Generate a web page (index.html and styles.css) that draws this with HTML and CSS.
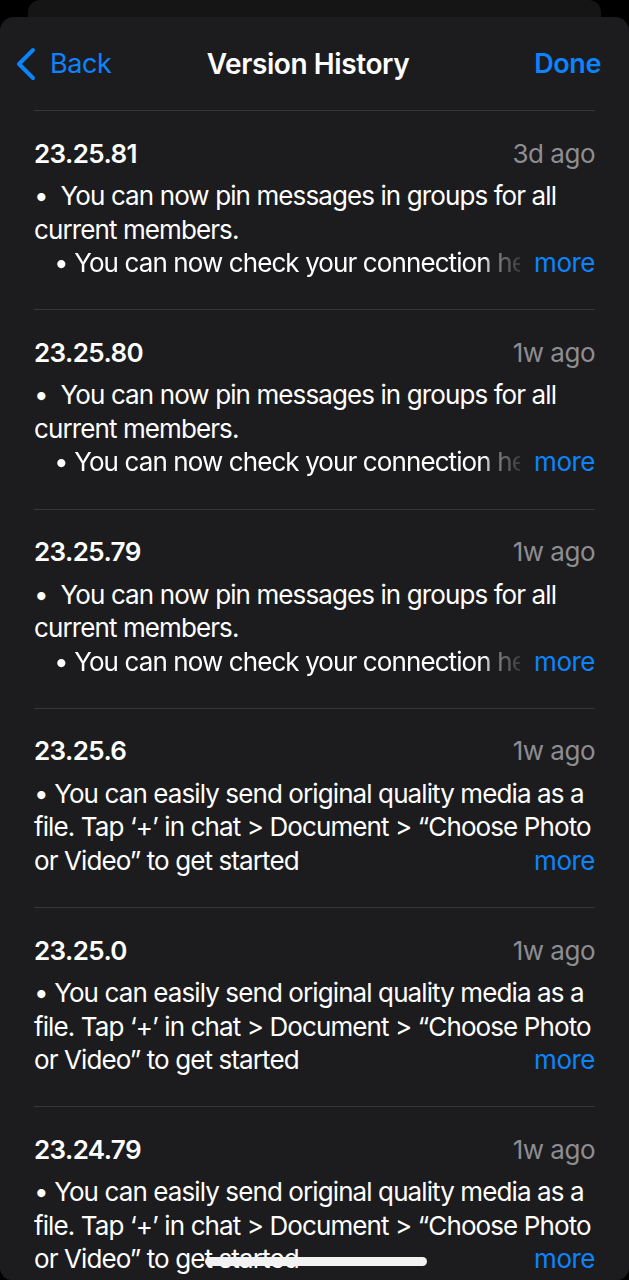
FILE: index.html
```html
<!DOCTYPE html>
<html lang="en">
<head>
<meta charset="utf-8">
<title>Version History</title>
<link rel="stylesheet" href="styles.css">
</head>
<body>
<div class="back-card"></div>
<div class="sheet">
  <header class="nav">
    <div class="nav-back">
      <svg class="chev" width="22" height="34" viewBox="0 0 22 34"><path d="M18 3 L4 17 L18 31" fill="none" stroke="#0b84fe" stroke-width="4" stroke-linecap="round" stroke-linejoin="round"/></svg>
      <span>Back</span>
    </div>
    <div class="nav-title">Version History</div>
    <div class="nav-done">Done</div>
  </header>

  <section class="entry">
    <div class="entry-head"><span class="ver">23.25.81</span><span class="when">3d ago</span></div>
    <div class="body">
      <div class="line"><span class="dot">•</span>&nbsp; You can now pin messages in groups for all</div>
      <div class="line">current members.</div>
      <div class="line row"><span class="trunc"><span class="sub">•</span> You can now check your connection health</span><span class="more">more</span></div>
    </div>
  </section>

  <section class="entry">
    <div class="entry-head"><span class="ver">23.25.80</span><span class="when">1w ago</span></div>
    <div class="body">
      <div class="line"><span class="dot">•</span>&nbsp; You can now pin messages in groups for all</div>
      <div class="line">current members.</div>
      <div class="line row"><span class="trunc"><span class="sub">•</span> You can now check your connection health</span><span class="more">more</span></div>
    </div>
  </section>

  <section class="entry">
    <div class="entry-head"><span class="ver">23.25.79</span><span class="when">1w ago</span></div>
    <div class="body">
      <div class="line"><span class="dot">•</span>&nbsp; You can now pin messages in groups for all</div>
      <div class="line">current members.</div>
      <div class="line row"><span class="trunc"><span class="sub">•</span> You can now check your connection health</span><span class="more">more</span></div>
    </div>
  </section>

  <section class="entry">
    <div class="entry-head"><span class="ver">23.25.6</span><span class="when">1w ago</span></div>
    <div class="body">
      <div class="line"><span class="dot">•</span> You can easily send original quality media as a</div>
      <div class="line">file. Tap ‘+’ in chat &gt; Document &gt; “Choose Photo</div>
      <div class="line row"><span>or Video” to get started</span><span class="more">more</span></div>
    </div>
  </section>

  <section class="entry">
    <div class="entry-head"><span class="ver">23.25.0</span><span class="when">1w ago</span></div>
    <div class="body">
      <div class="line"><span class="dot">•</span> You can easily send original quality media as a</div>
      <div class="line">file. Tap ‘+’ in chat &gt; Document &gt; “Choose Photo</div>
      <div class="line row"><span>or Video” to get started</span><span class="more">more</span></div>
    </div>
  </section>

  <section class="entry">
    <div class="entry-head"><span class="ver">23.24.79</span><span class="when">1w ago</span></div>
    <div class="body">
      <div class="line"><span class="dot">•</span> You can easily send original quality media as a</div>
      <div class="line">file. Tap ‘+’ in chat &gt; Document &gt; “Choose Photo</div>
      <div class="line row"><span>or Video” to get started</span><span class="more">more</span></div>
    </div>
  </section>

  <div class="home-indicator"></div>
</div>
</body>
</html>
```

FILE: styles.css
```css
* { box-sizing: border-box; }
html, body {
  margin: 0;
  padding: 0;
  background: #000;
  width: 629px;
  height: 1280px;
  overflow: hidden;
  font-family: Inter, "Noto Sans", sans-serif;
  color: #fff;
  -webkit-font-smoothing: antialiased;
}
.back-card {
  margin: 0 28px;
  height: 17px;
  background: #151516;
  border-radius: 12px 12px 0 0;
}
.sheet {
  position: relative;
  height: 1263px;
  background: #1c1c1e;
  border-radius: 14px 14px 12px 12px;
  overflow: hidden;
}
.nav {
  height: 93px;
  display: grid;
  grid-template-columns: 1fr auto 1fr;
  align-items: center;
  padding: 0 28px 0 15px;
  font-size: 27px;
  letter-spacing: -0.4px;
}
.nav-back {
  display: flex;
  align-items: center;
  gap: 13px;
  color: #0b84fe;
}
.chev { display: block; }
.nav-title {
  font-weight: 600;
  font-size: 28px;
  color: #fff;
}
.nav-done {
  justify-self: end;
  color: #0b84fe;
  font-weight: 600;
}
.entry {
  margin: 0 34px;
  border-top: 1px solid #363638;
  padding: 25px 0 29.8px;
  font-size: 26px;
  letter-spacing: -0.9px;
}
.entry-head {
  display: flex;
  justify-content: space-between;
  align-items: center;
  height: 34px;
  margin-bottom: 9px;
}
.ver { font-weight: 600; letter-spacing: -0.6px; }
.when { color: #8d8d93; letter-spacing: -0.5px; }
.line {
  height: 33.5px;
  line-height: 33.5px;
  white-space: nowrap;
}
.dot { padding-left: 0; }
.row {
  display: flex;
  justify-content: space-between;
}
.trunc {
  flex: 1;
  overflow: hidden;
  padding-left: 20px;
  -webkit-mask-image: linear-gradient(to right, #000 0, #000 calc(100% - 34px), rgba(0,0,0,.55) calc(100% - 30px), rgba(0,0,0,.12) 100%);
  mask-image: linear-gradient(to right, #000 0, #000 calc(100% - 34px), rgba(0,0,0,.55) calc(100% - 30px), rgba(0,0,0,.12) 100%);
}
.more {
  color: #0b84fe;
  margin-left: 14px;
  letter-spacing: -0.5px;
}
.home-indicator {
  position: absolute;
  left: 205px;
  bottom: 14px;
  width: 222px;
  height: 9px;
  border-radius: 5px;
  background: #f2f2f2;
}
```
